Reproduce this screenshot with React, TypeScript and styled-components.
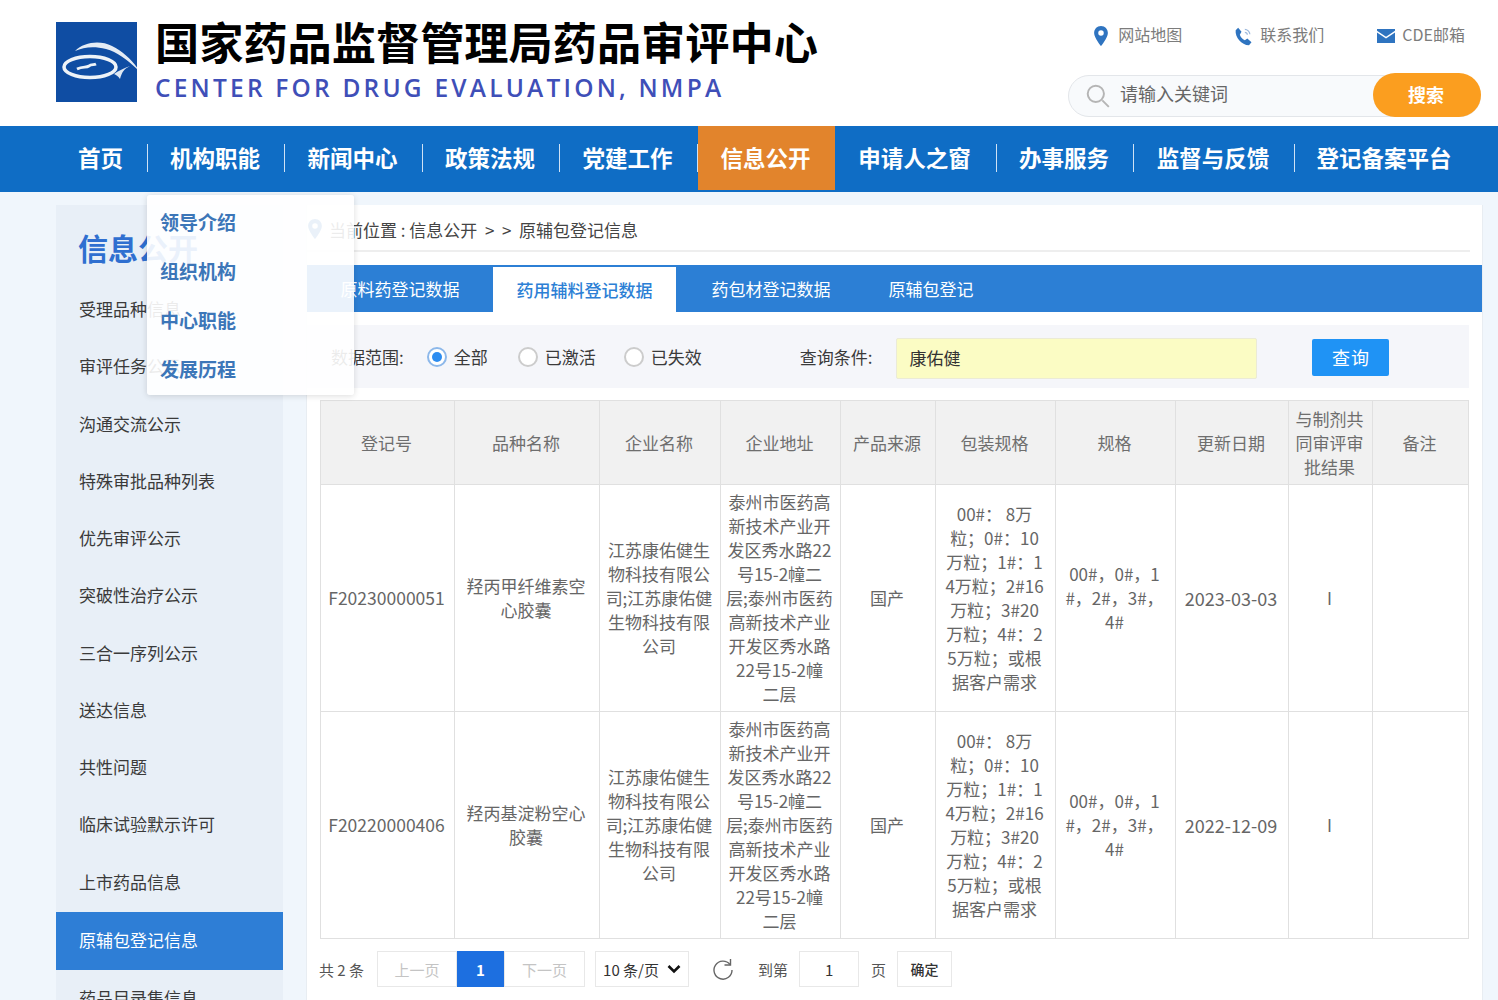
import React from "react";
import styled, { createGlobalStyle } from "styled-components";

const Global = createGlobalStyle`
  html, body { margin: 0; padding: 0; height: 1000px; overflow: hidden; background: #f0f6fc; }
  * { box-sizing: border-box; }
  body { font-family: "Noto Sans CJK SC", "Noto Sans", sans-serif; color: #555; }
`;

const Page = styled.div`width: 1498px; height: 1000px; overflow: hidden; position: relative;`;
const Header = styled.header`height: 126px; background: #fff; padding: 22px 17px 0 56px; display: flex; justify-content: space-between;`;
const Brand = styled.div`display: flex; gap: 18px;`;
const LogoBox = styled.div`width: 81px; height: 80px; background: #0f4da3;`;
const BrandText = styled.div`display: flex; flex-direction: column;`;
const BrandCn = styled.div`font-size: 44.2px; line-height: 44px; margin-top: -3px; font-weight: 700; color: #000; white-space: nowrap;`;
const BrandEn = styled.div`font-family: "Open Sans", sans-serif; font-size: 24.5px; line-height: 30px; margin-top: 10px; font-weight: 600; letter-spacing: 3.2px; color: #3f4fb8; white-space: nowrap;`;
const Tools = styled.div`width: 413px; display: flex; flex-direction: column;`;
const Links = styled.div`display: flex; gap: 52px; justify-content: flex-end; padding-right: 16px; height: 27px; margin: 0 0 26px;`;
const LinkItem = styled.div`display: flex; align-items: center; gap: 6px; height: 27px; font-size: 16px; line-height: 23px; color: #7c7c7c; white-space: nowrap;`;
const LinkText = styled.span`position: relative; top: -1px;`;
const Search = styled.div`height: 42px; border: 1px solid #e3e6ea; border-radius: 21px; background: #f8fafc; display: flex; align-items: center; padding-left: 16px; position: relative;`;
const SearchText = styled.span`margin-left: 9px; padding-bottom: 6px; font-size: 18px; line-height: 38px; color: #666;`;
const SearchBtn = styled.div`position: absolute; right: -1px; top: -3px; width: 108px; height: 44px; padding: 0 2px 2px 0; border-radius: 22px; background: #fb9e1f; color: #fff; font-size: 18px; font-weight: 700; display: flex; align-items: center; justify-content: center;`;

const Nav = styled.nav`height: 66px; background: #0f6dc5; padding-left: 56px; display: flex; align-items: center; position: relative;`;
const NavItem = styled.div<{ $w: number; $active?: boolean }>`
  width: ${p => p.$w}px; height: 64px; padding: 0 2px 3px 0; align-self: flex-start; display: flex; align-items: center; justify-content: center;
  font-size: 22.5px; font-weight: 700; color: #fff; white-space: nowrap; position: relative;
  background: ${p => p.$active ? "#e2842c" : "transparent"};
`;
const NavSep = styled.span`width: 1px; height: 28px; background: #cfe2f5; flex: none; margin-top: -2px;`;

const Dropdown = styled.div`position: absolute; left: 147px; top: 195px; width: 207px; height: 200px; background: rgba(255,255,255,.9); border-radius: 3px; box-shadow: 0 1px 6px rgba(0,0,0,.14); padding-top: 2px; z-index: 5;`;
const DropItem = styled.div`height: 49px; display: flex; align-items: center; padding-left: 13px; font-size: 19px; font-weight: 700; color: #3c76b8;`;

const Body = styled.div`display: flex; gap: 23px; padding: 13px 16px 0 56px;`;
const Side = styled.aside`width: 227px; height: 800px; background: #e8eff7; flex: none;`;
const SideTitle = styled.h2`margin: 0; height: 75px; padding: 22px 0 0 22px; font-size: 30px; line-height: 40px; font-weight: 700; color: #2f6fd0;`;
const SideItem = styled.div`height: 57.25px; display: flex; align-items: center; padding-left: 23px; font-size: 17px; color: #3a3a3a;`;
const SideItemActive = styled(SideItem)`height: 58px; margin: 2px 0 -1px; padding-bottom: 3px; color: #fff; background: #2e7ed6;`;

const Main = styled.main`flex: 1; height: 800px; background: #fff; border-left: 1px solid #e8edf2; border-right: 1px solid #e8edf2;`;
const Crumb = styled.div`height: 47px; margin-right: 12px; border-bottom: 2px solid #eee; display: flex; align-items: center; font-size: 17px; color: #444; padding: 3px 0 0 0; white-space: pre;`;
const Pin = styled.span`display: inline-flex; margin: 0 3px 0 -3px;`;
const Tabs = styled.div`margin-top: 13px; height: 47px; background: #2c7fd5; display: flex;`;
const Tab = styled.div<{ $w: number; $active?: boolean }>`width: ${p => p.$w}px; margin-top: ${p => p.$active ? 2 : 0}px; display: flex; align-items: center; justify-content: center; font-size: 17px; font-weight: ${p => p.$active ? 500 : 400}; color: ${p => p.$active ? "#2c7fd5" : "#fff"}; background: ${p => p.$active ? "#fff" : "transparent"};`;
const Filter = styled.div`margin-top: 13px; margin-right: 13px; height: 63px; background: #f5f6fa; display: flex; align-items: center; padding-left: 24px; font-size: 17px; color: #3a3a3a;`;
const Radio = styled.span<{ $on?: boolean }>`width: 20px; height: 20px; border-radius: 50%; border: 2px solid ${p => p.$on ? "#8db8ea" : "#ccc"}; background: #fff; display: inline-flex; align-items: center; justify-content: center;
  &::after { content: ""; width: 10px; height: 10px; border-radius: 50%; background: ${p => p.$on ? "#2c8cf0" : "transparent"}; }`;
const RadioLabel = styled.label`display: flex; align-items: center; gap: 7px;`;
const QueryInput = styled.div`width: 361px; height: 41px; margin: 4px 0 0 24px; background: #fbfcc4; border: 1px solid #ebebd6; border-radius: 2px; padding: 0 0 2px 12px; display: flex; align-items: center; color: #333;`;
const QueryBtn = styled.div`width: 77px; height: 37px; margin: 2px 0 0 55px; padding-bottom: 2px; border-radius: 2px; background: #1f93f5; color: #fff; display: flex; align-items: center; justify-content: center; font-size: 18px; letter-spacing: 1px;`;

const TableWrap = styled.div`margin: 12px 13px 0 13px;`;
const Table = styled.table`width: 1148px; border-collapse: collapse; table-layout: fixed; font-size: 17px; line-height: 24px; color: #666; text-align: center;
  th, td { border: 1px solid #e0e0e0; padding: 0 3px 0 1px; white-space: nowrap; }
  th { font-weight: 400; height: 84px; background: #f1f1f1; color: #6e6e6e; }
  td { height: 227px; }
`;
const Code = styled.span`font-size: 17.5px;`;
const DateText = styled.span`font-size: 18px;`;

const Pager = styled.div`display: flex; align-items: center; height: 36px; margin: 12px 0 0 12px; font-size: 15px; color: #555; white-space: nowrap;`;
const PageBox = styled.div<{ $w: number; $on?: boolean; $dim?: boolean }>`width: ${p => p.$w}px; height: 36px; gap: 8px; border: 1px solid ${p => p.$on ? "#1d6fe0" : "#e8e8e8"}; display: flex; align-items: center; justify-content: center; background: ${p => p.$on ? "#1d6fe0" : "#fff"}; color: ${p => p.$on ? "#fff" : p.$dim ? "#c4c4c4" : "#333"}; font-weight: ${p => p.$on ? 700 : 400};`;
const ConfirmBox = styled(PageBox)`font-size: 14px; font-weight: 500;`;
const Gap = styled.span<{ $w: number }>`width: ${p => p.$w}px; flex: none;`;

const rows = [
  ["F20230000051", ["羟丙甲纤维素空", "心胶囊"], "2023-03-03"],
  ["F20220000406", ["羟丙基淀粉空心", "胶囊"], "2022-12-09"],
] as const;
const widths = [134, 145, 121, 120, 95, 120, 120, 113, 84, 96];
const heads: (readonly string[])[] = [["登记号"], ["品种名称"], ["企业名称"], ["企业地址"], ["产品来源"], ["包装规格"], ["规格"], ["更新日期"], ["与制剂共", "同审评审", "批结果"], ["备注"]];
const company = ["江苏康佑健生", "物科技有限公", "司;江苏康佑健", "生物科技有限", "公司"];
const address = ["泰州市医药高", "新技术产业开", "发区秀水路22", "号15-2幢二", "层;泰州市医药", "高新技术产业", "开发区秀水路", "22号15-2幢", "二层"];
const packing = ["00#： 8万", "粒；0#：10", "万粒；1#：1", "4万粒；2#16", "万粒；3#20", "万粒；4#：2", "5万粒；或根", "据客户需求"];
const spec = ["00#，0#，1", "#，2#，3#，", "4#"];
const side = ["受理品种信息", "审评任务公示", "沟通交流公示", "特殊审批品种列表", "优先审评公示", "突破性治疗公示", "三合一序列公示", "送达信息", "共性问题", "临床试验默示许可", "上市药品信息", "原辅包登记信息", "药品目录集信息"];
const nav: [string, number][] = [["首页", 91], ["机构职能", 136], ["新闻中心", 137], ["政策法规", 136], ["党建工作", 137], ["信息公开", 137], ["申请人之窗", 161], ["办事服务", 136], ["监督与反馈", 160], ["登记备案平台", 180]];

const Lines = ({ items }: { items: readonly string[] }) => (
  <>{items.map((t, i) => <React.Fragment key={i}>{i > 0 && <br />}{t}</React.Fragment>)}</>
);

const PinIcon = ({ c = "#2f74c0" }: { c?: string }) => (
  <svg width="22" height="22" viewBox="0 0 24 24"><path fill={c} fillRule="evenodd" d="M12 1C7.500 1 4.500 4.500 4.500 8.800 4.500 14 12 23 12 23s7.500-9 7.500-14.200C19.500 4.500 16.500 1 12 1zm0 4.800a3 3 0 1 1 0 6 3 3 0 0 1 0-6z" /></svg>
);

export default function App() {
  return (
    <Page>
      <Global />
      <Header>
        <Brand>
          <LogoBox>
            <svg width="81" height="80" viewBox="0 0 81 80" fill="none">
              <path d="M19 29C28 20 44 18 56 24 68 30 78 40 84 50 74 40 62 30 50 27 38 24 28 25 19 29Z" fill="#e4ecf5" />
              <ellipse cx="34" cy="45" rx="26" ry="10.500" stroke="#eef3f8" strokeWidth="3.500" />
              <path d="M21 47C27 44 30 46 33 44 35 42 38 43 40 42" stroke="#eef3f8" strokeWidth="2.800" />
              <path d="M58 52C62 49 68 46 74 44 68 47 66 50 64 57 62 54 60 53 58 52Z" fill="#dfe8f2" />
            </svg>
          </LogoBox>
          <BrandText>
            <BrandCn>国家药品监督管理局药品审评中心</BrandCn>
            <BrandEn>CENTER FOR DRUG EVALUATION, NMPA</BrandEn>
          </BrandText>
        </Brand>
        <Tools>
          <Links>
            <LinkItem><PinIcon /><LinkText>网站地图</LinkText></LinkItem>
            <LinkItem>
              <svg width="20" height="22" viewBox="0 0 24 24" fill="none">
                <path fill="#2f74c0" d="M5 2l4 5-2 3.500c1 3 3 5 6 6.500l3-2 5 4.500-3 3.500C9 23 1 13 2 5z" />
                <path d="M13 4c3 0 6 3 6 6M13 7.500c1.500 0 3 1.500 3 3" stroke="#9db9dc" strokeWidth="1.500" />
              </svg>
              <LinkText>联系我们</LinkText>
            </LinkItem>
            <LinkItem>
              <svg width="20" height="18" viewBox="0 0 20 16"><path fill="#2f74c0" d="M1 1h18v1.800l-9 6-9-6zm0 3.600l9 6 9-6V15H1z" /></svg>
              <LinkText>CDE邮箱</LinkText>
            </LinkItem>
          </Links>
          <Search>
            <svg width="26" height="26" viewBox="0 0 24 24" fill="none" stroke="#b5b5b5" strokeWidth="1.800"><circle cx="10" cy="10" r="7.500" /><path d="M16 16l6 6" /></svg>
            <SearchText>请输入关键词</SearchText>
            <SearchBtn>搜索</SearchBtn>
          </Search>
        </Tools>
      </Header>
      <Nav>
        {nav.map(([t, w], i) => (
          <React.Fragment key={t}>
            <NavItem $w={w} $active={t === "信息公开"}>{t}</NavItem>
            {i < nav.length - 1 && t !== "信息公开" && <NavSep />}
          </React.Fragment>
        ))}
      </Nav>
      <Dropdown>
        {["领导介绍", "组织机构", "中心职能", "发展历程"].map(t => <DropItem key={t}>{t}</DropItem>)}
      </Dropdown>
      <Body>
        <Side>
          <SideTitle>信息公开</SideTitle>
          {side.map(t => t === "原辅包登记信息" ? <SideItemActive key={t}>{t}</SideItemActive> : <SideItem key={t}>{t}</SideItem>)}
        </Side>
        <Main>
          <Crumb><Pin><PinIcon /></Pin>当前位置 : 信息公开  &gt;  &gt;  原辅包登记信息</Crumb>
          <Tabs>
            <Tab $w={186}>原料药登记数据</Tab>
            <Tab $w={183} $active>药用辅料登记数据</Tab>
            <Tab $w={190}>药包材登记数据</Tab>
            <Tab $w={130}>原辅包登记</Tab>
          </Tabs>
          <Filter>
            数据范围:
            <Gap $w={23} />
            <RadioLabel><Radio $on />全部</RadioLabel>
            <Gap $w={30} />
            <RadioLabel><Radio />已激活</RadioLabel>
            <Gap $w={28} />
            <RadioLabel><Radio />已失效</RadioLabel>
            <Gap $w={98} />
            查询条件:
            <QueryInput>康佑健</QueryInput>
            <QueryBtn>查询</QueryBtn>
          </Filter>
          <TableWrap>
            <Table>
              <colgroup>{widths.map((w, i) => <col key={i} width={w} />)}</colgroup>
              <thead><tr>{heads.map(h => <th key={h[0]}><Lines items={h} /></th>)}</tr></thead>
              <tbody>
                {rows.map(r => (
                  <tr key={r[0]}>
                    <td><Code>{r[0]}</Code></td>
                    <td><Lines items={r[1]} /></td>
                    <td><Lines items={company} /></td>
                    <td><Lines items={address} /></td>
                    <td>国产</td>
                    <td><Lines items={packing} /></td>
                    <td><Lines items={spec} /></td>
                    <td><DateText>{r[2]}</DateText></td>
                    <td>I</td>
                    <td></td>
                  </tr>
                ))}
              </tbody>
            </Table>
          </TableWrap>
          <Pager>
            共 2 条
            <Gap $w={13} />
            <PageBox $w={80} $dim>上一页</PageBox>
            <PageBox $w={47} $on>1</PageBox>
            <PageBox $w={81} $dim>下一页</PageBox>
            <Gap $w={10} />
            <PageBox $w={94}>
              10 条/页
              <svg width="14" height="10" viewBox="0 0 14 10" fill="none" stroke="#111" strokeWidth="2.600"><path d="M1.500 2l5.500 5.500L12.500 2" /></svg>
            </PageBox>
            <Gap $w={23} />
            <svg width="22" height="24" viewBox="0 0 22 24" fill="none" stroke="#666" strokeWidth="1.400"><path d="M18 7.500A9 9 0 1 0 20 13" /><path d="M18.500 2v6h-6" /></svg>
            <Gap $w={24} />
            到第
            <Gap $w={11} />
            <PageBox $w={60}>1</PageBox>
            <Gap $w={12} />
            页
            <Gap $w={11} />
            <ConfirmBox $w={55}>确定</ConfirmBox>
          </Pager>
        </Main>
      </Body>
    </Page>
  );
}
